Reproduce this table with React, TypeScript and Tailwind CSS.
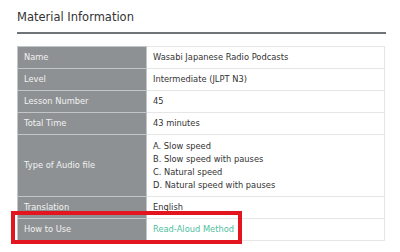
import React from 'react';

type Row = { label: string; value: React.ReactNode; tall?: boolean };

const rows: Row[] = [
  { label: 'Name', value: 'Wasabi Japanese Radio Podcasts' },
  { label: 'Level', value: 'Intermediate (JLPT N3)' },
  { label: 'Lesson Number', value: '45' },
  { label: 'Total Time', value: '43 minutes' },
  {
    label: 'Type of Audio file',
    tall: true,
    value: (
      <div className="flex flex-col">
        <span>A. Slow speed</span>
        <span>B. Slow speed with pauses</span>
        <span>C. Natural speed</span>
        <span>D. Natural speed with pauses</span>
      </div>
    ),
  },
  { label: 'Translation', value: 'English' },
  {
    label: 'How to Use',
    value: <span className="text-[#4fbf9f]">Read-Aloud Method</span>,
  },
];

export default function App() {
  return (
    <div className="w-[400px] h-[252px] bg-white pl-[17px] pr-[14px] pt-[7px] font-['DejaVu_Sans',Verdana,sans-serif] text-[#333]">
      <h2 className="text-[11.5px] leading-[20px] pb-[5px] border-b-2 border-[#6f7479]">
        Material Information
      </h2>

      <div className="relative mt-[12px] w-[368px]">
        <table className="w-full border-collapse text-[8.3px] leading-[13px]">
          <tbody>
            {rows.map((r, i) => (
              <tr key={i} className={r.tall ? 'h-[62px]' : 'h-[22px]'}>
                <th className="w-[129px] bg-[#8e9193] text-[#f1f2f2] font-normal text-left align-middle px-[6px] border border-[#c3c6c7]">
                  {r.label}
                </th>
                <td className="bg-white align-middle px-[6px] border border-[#e6e6e6]">{r.value}</td>
              </tr>
            ))}
          </tbody>
        </table>

        {/* highlight around the last row */}
        <div className="absolute left-[-6px] top-[165px] w-[231px] h-[33px] border-4 border-[#e3161f] pointer-events-none" />
      </div>
    </div>
  );
}
